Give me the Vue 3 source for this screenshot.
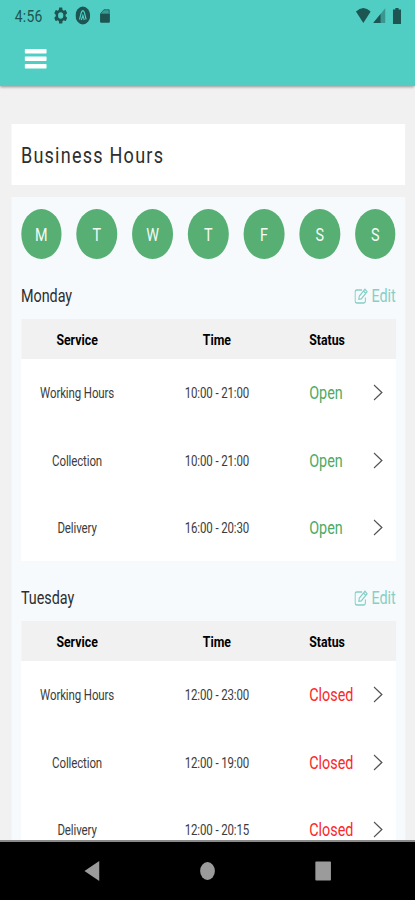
<template>
  <div class="viewport">
    <div class="screen">
      <header class="appbar">
        <div class="statusbar">
          <span class="clock">4:56</span>
          <svg class="gear" viewBox="2 2 20 20">
            <path fill-rule="evenodd" d="M19.4 13a7.5 7.5 0 0 0 0-2l2.1-1.65a.5.5 0 0 0 .12-.64l-2-3.46a.5.5 0 0 0-.6-.22l-2.5 1a7.3 7.3 0 0 0-1.7-1l-.38-2.65A.5.5 0 0 0 14 2h-4a.5.5 0 0 0-.5.42L9.12 5.07a7.7 7.7 0 0 0-1.7 1l-2.5-1a.5.5 0 0 0-.6.22l-2 3.46a.5.5 0 0 0 .12.64L4.55 11a7.9 7.9 0 0 0 0 2l-2.1 1.65a.5.5 0 0 0-.12.64l2 3.46c.12.22.38.3.6.22l2.5-1c.52.4 1.08.73 1.7 1l.38 2.65c.03.24.24.42.5.42h4c.25 0 .46-.18.5-.42l.38-2.65a7.3 7.3 0 0 0 1.7-1l2.5 1c.23.08.48 0 .6-.22l2-3.46a.5.5 0 0 0-.12-.64zM12 16a4 4 0 1 1 0-8 4 4 0 0 1 0 8z" />
          </svg>
          <svg class="badge" viewBox="0 0 20 20">
            <circle cx="10" cy="10" r="10" />
            <path class="badge-mark" d="M5.5 14.5L8 6.5Q10 3 12 6.5L14.5 14.5M8 15L10 10L12 15" />
          </svg>
          <svg class="sdcard" viewBox="0 0 14 16">
            <path class="sdcard-top" d="M1 5L5.5 .7H13V5" />
            <path d="M0 5h14v9.5Q14 16 12.5 16h-11Q0 16 0 14.5z" />
          </svg>
          <span class="spacer"></span>
          <svg class="wifi" viewBox="0 0 18 15">
            <path d="M0 3.5Q9-3.5 18 3.5L9 15z" />
          </svg>
          <svg class="signal" viewBox="0 0 15 15">
            <path class="faint" d="M15 0v15H0z" />
            <path d="M9 6v9H0z" />
          </svg>
          <svg class="battery" viewBox="0 0 10 16">
            <path d="M3 0h4v1.5h3V16H0V1.5h3z" />
          </svg>
        </div>
        <button class="menu" aria-label="Menu">
          <svg viewBox="0 0 27 20">
            <rect width="27" height="4.6" rx="1" />
            <rect y="7.5" width="27" height="4.6" rx="1" />
            <rect y="15" width="27" height="4.6" rx="1" />
          </svg>
        </button>
      </header>

      <main class="content">
        <h1 class="title">Business Hours</h1>

        <div class="panel">
          <div class="days">
            <button v-for="(letter, i) in letters" :key="i" class="day">{{ letter }}</button>
          </div>

          <section v-for="day in schedule" :key="day.name" class="schedule">
            <div class="schedule-head">
              <h2>{{ day.name }}</h2>
              <button class="edit">
                <svg viewBox="0 0 17 16">
                  <path d="M9.5 2H3Q1 2 1 4v9Q1 15 3 15h8.5q2 0 2-2V9.5" />
                  <path d="M6 8.2L13 1.2l2.6 2.6-7 7L5.5 11.3zM11.3 3l2.5 2.5" />
                </svg>
                <span>Edit</span>
              </button>
            </div>
            <div class="table">
              <div class="row head">
                <span class="center">Service</span>
                <span class="center">Time</span>
                <span class="left">Status</span>
              </div>
              <div v-for="s in day.services" :key="s.name" class="row">
                <span class="center">{{ s.name }}</span>
                <span class="center">{{ s.time }}</span>
                <span class="left status" :class="{ closed: !day.open }">{{ day.open ? 'Open' : 'Closed' }}</span>
                <svg class="chevron" viewBox="0 0 12 17">
                  <path d="M1 1l9.5 7.5L1 16" />
                </svg>
              </div>
            </div>
          </section>
        </div>
      </main>

      <nav class="navbar">
        <svg viewBox="0 0 20 20"><path d="M19 0v20L1 10z" /></svg>
        <svg viewBox="0 0 20 20"><circle cx="10" cy="10" r="9" /></svg>
        <svg viewBox="0 0 20 20"><rect x=".5" y=".5" width="19" height="19" rx="1" /></svg>
      </nav>
    </div>
  </div>
</template>

<script setup>
const letters = ['M', 'T', 'W', 'T', 'F', 'S', 'S']

const schedule = [
  {
    name: 'Monday',
    open: true,
    services: [
      { name: 'Working Hours', time: '10:00 - 21:00' },
      { name: 'Collection', time: '10:00 - 21:00' },
      { name: 'Delivery', time: '16:00 - 20:30' },
    ],
  },
  {
    name: 'Tuesday',
    open: false,
    services: [
      { name: 'Working Hours', time: '12:00 - 23:00' },
      { name: 'Collection', time: '12:00 - 19:00' },
      { name: 'Delivery', time: '12:00 - 20:15' },
    ],
  },
]
</script>

<style>
body {
  margin: 0;
  background: #f1f1f1;
}
</style>

<style scoped>
.viewport {
  width: 415px;
  height: 900px;
  overflow: hidden;
}

/* the device screen is 506 units wide, narrowed to fit the viewport */
.screen {
  display: flex;
  flex-direction: column;
  width: 506px;
  height: 900px;
  transform: scaleX(0.82016);
  transform-origin: 0 0;
  background: #f1f1f1;
  font-family: Roboto, sans-serif;
  color: #2e2e2e;
}

button {
  border: 0;
  padding: 0;
  background: none;
  font: inherit;
}

.appbar {
  flex: none;
  height: 86px;
  background: #50cec4;
  box-shadow: 0 1px 3px rgba(0, 0, 0, 0.4);
  z-index: 1;
}

.statusbar {
  display: flex;
  align-items: center;
  height: 31px;
  padding: 0 17px 0 18px;
  color: #1d5552;
  fill: #1d5552;
}

.clock { width: 48px; font-size: 17px; letter-spacing: 0.3px; }
.gear { width: 16px; height: 17px; }
.badge { width: 18px; height: 19px; margin-left: 10px; }
.badge-mark { fill: none; stroke: #50cec4; stroke-width: 1.6; }
.sdcard { width: 12px; height: 16px; margin-left: 12px; }
.sdcard-top { fill: #3a9c95; stroke: #1d5552; stroke-width: 1; }
.spacer { flex: 1; }
.wifi { width: 18px; height: 15px; }
.signal { width: 15px; height: 15px; margin-left: 3px; }
.faint { opacity: 0.45; }
.battery { width: 10px; height: 16px; margin-left: 9px; }

.menu {
  display: block;
  margin: 17.5px 0 0 30px;
}

.menu svg {
  display: block;
  width: 27px;
  height: 20px;
  fill: #fff;
}

.content {
  flex: 1;
  min-height: 0;
  overflow: hidden;
  padding: 37.5px 12px 0 13.5px;
}

.title {
  height: 61.5px;
  margin: 0 0 12px;
  padding-left: 12px;
  background: #fff;
  font-size: 22px;
  font-weight: 400;
  line-height: 64px;
  letter-spacing: 1.5px;
}

.panel {
  padding: 12px 11.5px 40px 12px;
  background: #f6fafd;
}

.days {
  display: flex;
  justify-content: space-between;
}

.day {
  width: 49.5px;
  height: 50px;
  border-radius: 50%;
  background: #57af74;
  color: #f4fbf6;
  font-size: 17.5px;
  line-height: 52px;
}

.schedule-head {
  display: flex;
  align-items: center;
  justify-content: space-between;
  height: 60px;
  box-sizing: border-box;
  padding-top: 13px;
}

h2 {
  margin: 0;
  font-size: 17.5px;
  font-weight: 400;
}

.edit {
  display: flex;
  align-items: center;
  gap: 3.5px;
  color: #84cfc6;
  font-size: 17.5px;
}

.edit svg {
  width: 17px;
  height: 16px;
  fill: none;
  stroke: currentColor;
  stroke-width: 1.3;
}

.table { background: #fff; }

.row {
  display: grid;
  grid-template-columns: 137px 204px 86px 1fr;
  align-items: center;
  height: 67.5px;
  padding-top: 2px;
  box-sizing: border-box;
  color: #3c3c3c;
  font-size: 14px;
  letter-spacing: -0.14px;
}

.row.head {
  height: 39.5px;
  padding-top: 3px;
  background: #f1f1f1;
  color: #000;
  font-size: 15px;
  font-weight: 700;
  letter-spacing: 0;
}

.center { text-align: center; }
.left { padding-left: 10.5px; }

.status {
  color: #4caa65;
  font-size: 17.5px;
  letter-spacing: 0;
}

.closed { color: #fc2828; }

.chevron {
  width: 12px;
  height: 17px;
  margin: 0 0 1px 2px;
  fill: none;
  stroke: #555;
  stroke-width: 1.5;
}

.navbar {
  flex: none;
  display: flex;
  align-items: center;
  justify-content: space-between;
  height: 60px;
  padding: 0 102px;
  box-sizing: border-box;
  border-top: 2px solid #8a8a8a;
  background: #000;
}

.navbar svg {
  width: 20px;
  height: 20px;
  fill: #9b9b9b;
}
</style>
